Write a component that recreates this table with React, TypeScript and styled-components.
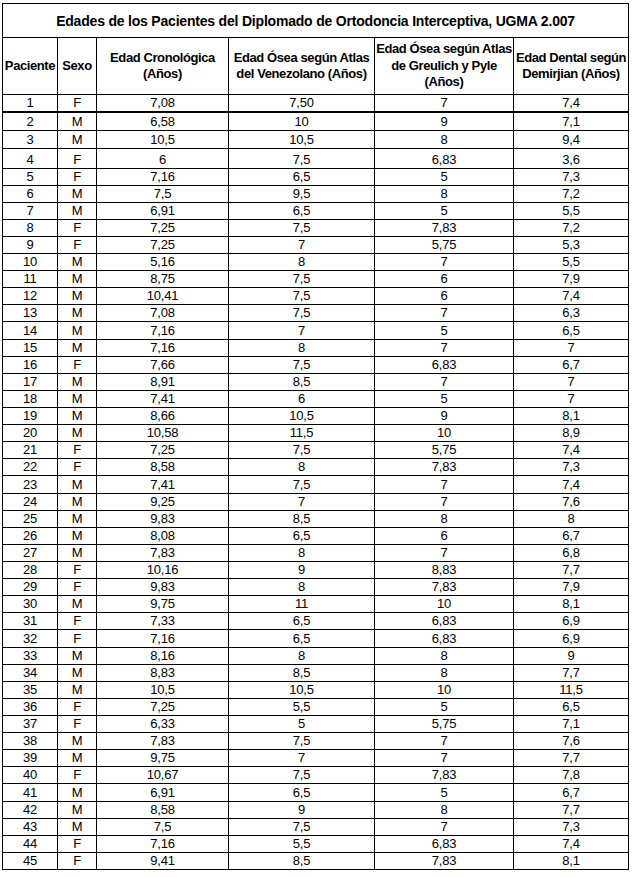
import { FC } from 'react';
import styled, { createGlobalStyle } from 'styled-components';

const GlobalStyle = createGlobalStyle`
  html, body {
    margin: 0;
    padding: 0;
    background: #ffffff;
  }
  body {
    font-family: 'Liberation Sans', Arial, sans-serif;
    color: #000000;
  }
`;

const Page = styled.div`
  padding: 3px 0 0 2px;
`;

const Sheet = styled.table`
  border-collapse: collapse;
  table-layout: fixed;
  width: 626px;
  font-family: 'Liberation Sans', Arial, sans-serif;
`;

const Col = styled.col<{ $width: number }>`
  width: ${({ $width }) => $width}px;
`;

const TitleCell = styled.th`
  height: 33px;
  border: 1px solid #000;
  padding: 0;
  font-size: 14px;
  font-weight: bold;
  letter-spacing: -0.2px;
  text-align: center;
  vertical-align: middle;
`;

const HeadCell = styled.th`
  height: 56px;
  border: 1px solid #000;
  padding: 0;
  font-size: 13px;
  line-height: 16.5px;
  font-weight: bold;
  letter-spacing: -0.4px;
  text-align: center;
  vertical-align: middle;
  white-space: nowrap;
`;

const HeadLine = styled.span`
  display: block;
`;

const Row = styled.tr<{ $height: number; $thick?: boolean }>`
  height: ${({ $height }) => $height}px;

  td {
    border-bottom-width: ${({ $thick }) => ($thick ? '2px' : '1px')};
  }
`;

const Cell = styled.td`
  border: 1px solid #000;
  padding: 0 2px 1px;
  font-size: 13px;
  line-height: 15px;
  letter-spacing: -0.2px;
  text-align: center;
  vertical-align: bottom;
  white-space: nowrap;
`;

const widths = [55, 39, 132, 146, 139, 115];

const headers = [
  ['Paciente'],
  ['Sexo'],
  ['Edad Cronológica', '(Años)'],
  ['Edad Ósea según Atlas', 'del Venezolano (Años)'],
  ['Edad Ósea según Atlas', 'de Greulich y Pyle', '(Años)'],
  ['Edad Dental según', 'Demirjian (Años)'],
];

type Patient = [string, string, string, string, string];

const patients: Patient[] = [
  ['F', '7,08', '7,50', '7', '7,4'],
  ['M', '6,58', '10', '9', '7,1'],
  ['M', '10,5', '10,5', '8', '9,4'],
  ['F', '6', '7,5', '6,83', '3,6'],
  ['F', '7,16', '6,5', '5', '7,3'],
  ['M', '7,5', '9,5', '8', '7,2'],
  ['M', '6,91', '6,5', '5', '5,5'],
  ['F', '7,25', '7,5', '7,83', '7,2'],
  ['F', '7,25', '7', '5,75', '5,3'],
  ['M', '5,16', '8', '7', '5,5'],
  ['M', '8,75', '7,5', '6', '7,9'],
  ['M', '10,41', '7,5', '6', '7,4'],
  ['M', '7,08', '7,5', '7', '6,3'],
  ['M', '7,16', '7', '5', '6,5'],
  ['M', '7,16', '8', '7', '7'],
  ['F', '7,66', '7,5', '6,83', '6,7'],
  ['M', '8,91', '8,5', '7', '7'],
  ['M', '7,41', '6', '5', '7'],
  ['M', '8,66', '10,5', '9', '8,1'],
  ['M', '10,58', '11,5', '10', '8,9'],
  ['F', '7,25', '7,5', '5,75', '7,4'],
  ['F', '8,58', '8', '7,83', '7,3'],
  ['M', '7,41', '7,5', '7', '7,4'],
  ['M', '9,25', '7', '7', '7,6'],
  ['M', '9,83', '8,5', '8', '8'],
  ['M', '8,08', '6,5', '6', '6,7'],
  ['M', '7,83', '8', '7', '6,8'],
  ['F', '10,16', '9', '8,83', '7,7'],
  ['F', '9,83', '8', '7,83', '7,9'],
  ['M', '9,75', '11', '10', '8,1'],
  ['F', '7,33', '6,5', '6,83', '6,9'],
  ['F', '7,16', '6,5', '6,83', '6,9'],
  ['M', '8,16', '8', '8', '9'],
  ['M', '8,83', '8,5', '8', '7,7'],
  ['M', '10,5', '10,5', '10', '11,5'],
  ['F', '7,25', '5,5', '5', '6,5'],
  ['F', '6,33', '5', '5,75', '7,1'],
  ['M', '7,83', '7,5', '7', '7,6'],
  ['M', '9,75', '7', '7', '7,7'],
  ['F', '10,67', '7,5', '7,83', '7,8'],
  ['M', '6,91', '6,5', '5', '6,7'],
  ['M', '8,58', '9', '8', '7,7'],
  ['M', '7,5', '7,5', '7', '7,3'],
  ['F', '7,16', '5,5', '6,83', '7,4'],
  ['F', '9,41', '8,5', '7,83', '8,1'],
];

const rowHeight = (index: number) => {
  if (index === 0) return 16;
  if (index === 1 || index === 2) return 18;
  if (index === 3) return 20;
  return 17.12;
};

const App: FC = () => (
  <Page>
    <GlobalStyle />
    <Sheet>
      <colgroup>
        {widths.map((w, i) => (
          <Col key={i} $width={w} />
        ))}
      </colgroup>
      <thead>
        <tr>
          <TitleCell colSpan={6}>
            Edades de los Pacientes del Diplomado de Ortodoncia Interceptiva, UGMA 2.007
          </TitleCell>
        </tr>
        <tr>
          {headers.map((lines, i) => (
            <HeadCell key={i}>
              {lines.map((line) => (
                <HeadLine key={line}>{line}</HeadLine>
              ))}
            </HeadCell>
          ))}
        </tr>
      </thead>
      <tbody>
        {patients.map((p, i) => (
          <Row key={i} $height={rowHeight(i)} $thick={i === 0}>
            <Cell>{i + 1}</Cell>
            {p.map((v, j) => (
              <Cell key={j}>{v}</Cell>
            ))}
          </Row>
        ))}
      </tbody>
    </Sheet>
  </Page>
);

export default App;
